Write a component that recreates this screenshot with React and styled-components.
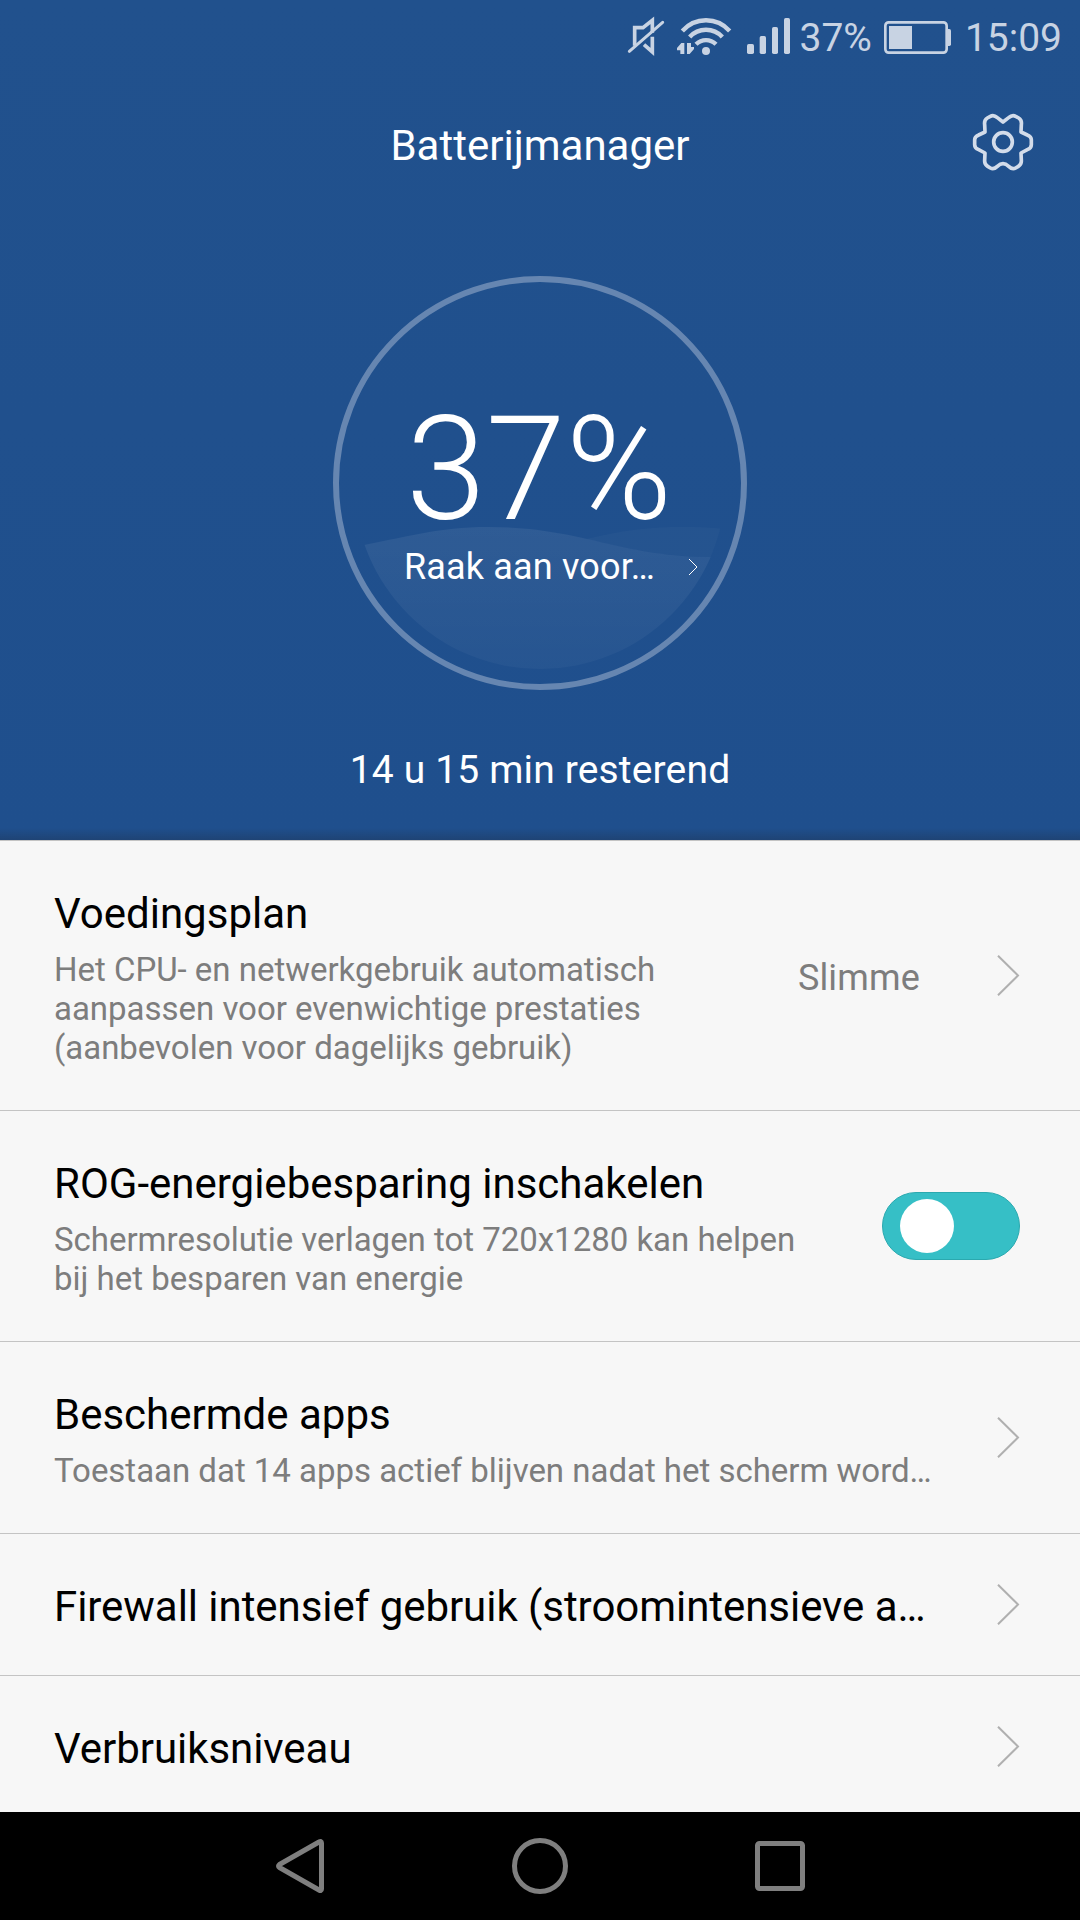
import React, { useState } from 'react';
import styled, { createGlobalStyle } from 'styled-components';

const GlobalStyle = createGlobalStyle`
  * {
    box-sizing: border-box;
  }
  body {
    margin: 0;
    font-family: Roboto, 'Noto Sans', sans-serif;
    background: #000;
  }
`;

const Screen = styled.div`
  display: flex;
  flex-direction: column;
  width: 1080px;
  height: 1920px;
  overflow: hidden;
`;

const Header = styled.header`
  display: flex;
  flex-direction: column;
  align-items: center;
  flex: none;
  height: 840px;
  color: #fff;
  background:
    linear-gradient(to top, rgba(30, 50, 80, 0.4), rgba(30, 50, 80, 0) 12px),
    linear-gradient(#21518d, #1f4f8d);
`;

const StatusBar = styled.div`
  display: flex;
  align-items: center;
  justify-content: flex-end;
  align-self: stretch;
  height: 72px;
  padding-right: 18px;
  color: #c8d3e3;
  font-size: 39px;
  line-height: 46px;
`;

const StatusIcon = styled.svg`
  display: block;
  flex: none;
  width: ${({ $width }) => $width}px;
  height: 42px;
  margin-right: ${({ $gap }) => $gap}px;
`;

const StatusText = styled.span`
  padding-top: 4px;
  margin-right: ${({ $gap }) => $gap || 0}px;
`;

const TitleBar = styled.div`
  display: grid;
  grid-template-columns: 1fr auto 1fr;
  align-items: center;
  align-self: stretch;
  height: 140px;
  padding: 0 46px;
`;

const Title = styled.h1`
  grid-column: 2;
  margin: 0;
  padding-top: 7px;
  font-size: 42px;
  font-weight: 400;
  line-height: 49px;
`;

const SettingsButton = styled.button`
  justify-self: end;
  display: block;
  width: 62px;
  height: 60px;
  padding: 0;
  border: 0;
  background: none;
`;

const Gauge = styled.div`
  display: grid;
  width: 414px;
  height: 414px;
  margin-top: 64px;

  > * {
    grid-area: 1 / 1;
  }
`;

const GaugeLabels = styled.div`
  display: flex;
  flex-direction: column;
  align-items: center;
  padding-top: 109px;
`;

const Percentage = styled.div`
  margin: 0 2px -8px 0;
  font-size: 144px;
  font-weight: 300;
  line-height: 169px;
`;

const Hint = styled.div`
  display: flex;
  align-items: center;
  align-self: stretch;
  gap: 33px;
  padding-left: 71px;
  font-size: 36px;
  line-height: 42px;
  letter-spacing: 0.16px;
`;

const Remaining = styled.div`
  margin-top: 57px;
  font-size: 39px;
  line-height: 46px;
  letter-spacing: 0.16px;
`;

const List = styled.main`
  height: 972px;
  overflow: hidden;
  border-top: 1px solid #c4c4c4;
  background: #f7f7f7;
`;

const Row = styled.div`
  display: flex;
  align-items: center;
  padding: 0 60px 0 54px;
  border-bottom: 1px solid #c4c4c4;
`;

const RowText = styled.div`
  flex: 1;
  padding: 48px 0 43px;
`;

const RowTitle = styled.div`
  color: #000;
  font-size: 42px;
  line-height: 49px;
  white-space: nowrap;

  &:only-child {
    margin-bottom: 1px;
    letter-spacing: -0.05px;
  }
`;

const RowSummary = styled.div`
  margin-top: 12px;
  color: #7d7d7d;
  font-size: 33px;
  line-height: 39px;
  letter-spacing: -0.02px;
`;

const RowValue = styled.div`
  margin: 4px 76px 0 130px;
  color: #7d7d7d;
  font-size: 36px;
  line-height: 42px;
  letter-spacing: 0.16px;
`;

const Switch = styled.button`
  display: flex;
  align-items: center;
  justify-content: ${({ $on }) => ($on ? 'flex-start' : 'flex-end')};
  width: 138px;
  height: 68px;
  margin-left: 60px;
  padding: 0 17px;
  border: 1px solid #2ba9af;
  border-radius: 34px;
  background: #36bfc6;
`;

const Knob = styled.span`
  width: 54px;
  height: 54px;
  border-radius: 50%;
  background: #fff;
`;

const NavBar = styled.nav`
  display: flex;
  align-items: center;
  justify-content: center;
  gap: 180px;
  height: 108px;
  background: #000;
`;

const NavIcon = styled.svg`
  width: 60px;
  height: 60px;
  fill: none;
  stroke: #7f7f7f;
  stroke-width: 5;
  stroke-linejoin: round;
`;

const ROWS = [
  {
    title: 'Voedingsplan',
    summary:
      'Het CPU- en netwerkgebruik automatisch aanpassen voor evenwichtige prestaties (aanbevolen voor dagelijks gebruik)',
    value: 'Slimme',
  },
  {
    title: 'ROG-energiebesparing inschakelen',
    summary: 'Schermresolutie verlagen tot 720x1280 kan helpen bij het besparen van energie',
    toggle: true,
  },
  {
    title: 'Beschermde apps',
    summary: 'Toestaan dat 14 apps actief blijven nadat het scherm word…',
  },
  { title: 'Firewall intensief gebruik (stroomintensieve a…' },
  { title: 'Verbruiksniveau' },
];

const MuteIcon = () => (
  <StatusIcon $width={38} $gap={11} viewBox="51 45 114 126">
    <g fill="none" stroke="currentColor" strokeWidth="11">
      <path d="M74 137V83H99L127 61V98" />
      <path d="M102 134L127 156V110" />
      <path d="M58 154L158 67" strokeWidth="9" strokeLinecap="round" />
    </g>
  </StatusIcon>
);

const WifiIcon = () => (
  <StatusIcon $width={56} $gap={14} viewBox="198 45 168 126">
    <g fill="none" stroke="currentColor" strokeWidth="13">
      <path d="M217 93C255 50 321 50 359 93" />
      <path d="M239 111C265 82 311 82 337 111" />
      <path d="M258 133C275 116 301 116 318 133" />
    </g>
    <circle cx="288" cy="153" r="12" fill="currentColor" />
    <path d="M223 129V162H211V151H201V144L214 129Z" fill="currentColor" />
    <path d="M231 129H243V141H252V147L239 162H231Z" fill="currentColor" />
  </StatusIcon>
);

const SignalIcon = () => (
  <StatusIcon $width={45} $gap={8} viewBox="408 45 135 126">
    <g fill="currentColor">
      <rect x="411" y="132" width="21" height="30" rx="5" />
      <rect x="449" y="108" width="19" height="54" rx="5" />
      <rect x="486" y="81" width="18" height="81" rx="5" />
      <rect x="522" y="54" width="18" height="108" rx="5" />
    </g>
  </StatusIcon>
);

const BatteryIcon = () => (
  <StatusIcon $width={69} $gap={13} viewBox="129 45 207 126">
    <rect x="136" y="67" width="184" height="91" rx="10" fill="none" stroke="currentColor" strokeWidth="8" />
    <rect x="147" y="78" width="69" height="69" fill="currentColor" />
    <path d="M322 87H328Q333 87 333 92V133Q333 138 328 138H322Z" fill="currentColor" />
  </StatusIcon>
);

const GearIcon = () => (
  <svg width="62" height="60" viewBox="96 67 186 180" fill="none" stroke="#d3dcea" strokeWidth="11">
    <path
      strokeLinejoin="round"
      d="M189 97L206 84Q217 74 227 80L236 85Q246 91 244 105L243 127L262 136Q274 141 274 150V165Q274 175 262 180L243 190L244 212Q245 224 235 230L227 235Q217 241 206 230Q189 214 172 230Q161 241 151 235L143 230Q133 224 134 212L135 190L116 180Q104 175 104 165V150Q104 141 116 136L135 127L134 105Q132 91 142 85L151 80Q161 74 172 84Z"
    />
    <circle cx="189" cy="157" r="28" />
  </svg>
);

const Wave = () => (
  <svg width="414" height="414" viewBox="0 0 414 414">
    <defs>
      <clipPath id="bowl">
        <circle cx="207" cy="207" r="186" />
      </clipPath>
      <linearGradient id="water" x1="0" y1="0" x2="0" y2="1">
        <stop offset="0" stopColor="#fff" stopOpacity="0.068" />
        <stop offset="1" stopColor="#fff" stopOpacity="0.03" />
      </linearGradient>
    </defs>
    <circle cx="207" cy="207" r="204" fill="none" stroke="#6686b1" strokeWidth="6" />
    <g clipPath="url(#bowl)">
      <path
        d="M20 271C70 262 105 251 155 251C250 251 285 281 380 281H400V400H20Z"
        fill="url(#water)"
      />
      <path d="M253 263C300 251 345 248 395 253V281H380C325 281 290 271 253 263Z" fill="#fff" fillOpacity="0.025" />
    </g>
  </svg>
);

const HintArrow = () => (
  <svg width="10" height="18" viewBox="0 0 10 18" fill="none" stroke="#fff" strokeWidth="1">
    <path d="M1 1L9 9L1 17" />
  </svg>
);

const Chevron = () => (
  <svg width="24" height="41" viewBox="0 0 24 41" fill="none" stroke="#b0b0b0" strokeWidth="2">
    <path d="M2 0.7L22 20.5L2 40.3" />
  </svg>
);

const App = () => {
  const [saving, setSaving] = useState(true);

  return (
    <Screen>
      <GlobalStyle />
      <Header>
        <StatusBar>
          <MuteIcon />
          <WifiIcon />
          <SignalIcon />
          <StatusText $gap={11}>37%</StatusText>
          <BatteryIcon />
          <StatusText>15:09</StatusText>
        </StatusBar>
        <TitleBar>
          <Title>Batterijmanager</Title>
          <SettingsButton>
            <GearIcon />
          </SettingsButton>
        </TitleBar>
        <Gauge>
          <Wave />
          <GaugeLabels>
            <Percentage>37%</Percentage>
            <Hint>
              Raak aan voor…
              <HintArrow />
            </Hint>
          </GaugeLabels>
        </Gauge>
        <Remaining>14 u 15 min resterend</Remaining>
      </Header>
      <List>
        {ROWS.map(({ title, summary, value, toggle }) => (
          <Row key={title}>
            <RowText>
              <RowTitle>{title}</RowTitle>
              {summary && <RowSummary>{summary}</RowSummary>}
            </RowText>
            {value && <RowValue>{value}</RowValue>}
            {toggle ? (
              <Switch $on={saving} onClick={() => setSaving(!saving)}>
                <Knob />
              </Switch>
            ) : (
              <Chevron />
            )}
          </Row>
        ))}
      </List>
      <NavBar>
        <NavIcon viewBox="0 0 60 60">
          <path d="M51.5 7V53Q51.5 55.5 49 54L9.5 31.5Q7.5 30 9.5 28.5L49 6Q51.5 4.5 51.5 7Z" />
        </NavIcon>
        <NavIcon viewBox="0 0 60 60">
          <circle cx="30" cy="30" r="25.5" />
        </NavIcon>
        <NavIcon viewBox="0 0 60 60">
          <rect x="7.5" y="7.5" width="45" height="45" rx="2" />
        </NavIcon>
      </NavBar>
    </Screen>
  );
};

export default App;
